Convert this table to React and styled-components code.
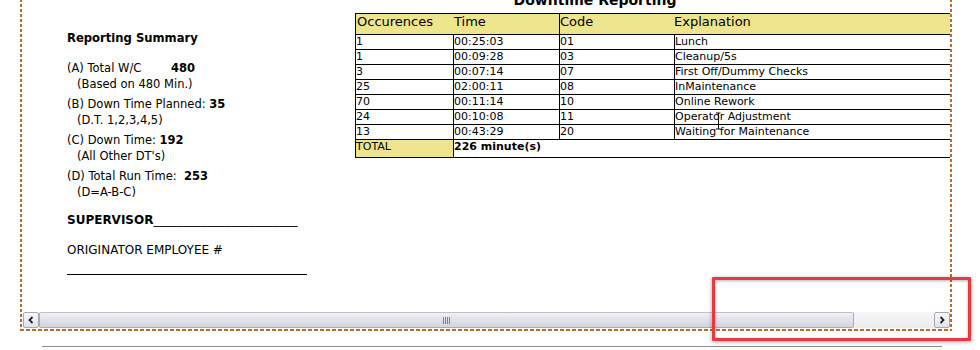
import React from 'react';
import styled, { createGlobalStyle } from 'styled-components';

const GlobalStyle = createGlobalStyle`
  html, body {
    margin: 0;
    padding: 0;
    background: #fff;
  }
  body {
    font-family: "DejaVu Sans", Verdana, sans-serif;
    color: #000;
    overflow: hidden;
  }
`;

const DASH = '#b06d38';

const Page = styled.div`
  position: relative;
  width: 980px;
  height: 350px;
  overflow: hidden;
`;

const Frame = styled.div`
  box-sizing: border-box;
  width: 932px;
  margin: -16px 0 0 20px;
  padding: 2px 2px 3px 2px;
  background:
    repeating-linear-gradient(90deg, ${DASH} 0 4px, transparent 4px 6px) left top / 100% 2px no-repeat,
    repeating-linear-gradient(90deg, ${DASH} 0 4px, transparent 4px 6px) left bottom / 100% 2px no-repeat,
    repeating-linear-gradient(180deg, ${DASH} 0 3px, transparent 3px 5px) left top / 2px 100% no-repeat,
    repeating-linear-gradient(180deg, ${DASH} 0 3px, transparent 3px 5px) right top / 2px 100% no-repeat;
`;

const Viewport = styled.div`
  display: flex;
  height: 326px;
  overflow: hidden;
`;

const Summary = styled.div`
  flex: none;
  box-sizing: border-box;
  width: 333px;
  padding: 45px 0 0 45px;
`;

const SummaryTitle = styled.div`
  font-size: 11.6px;
  font-weight: bold;
  line-height: 15px;
  margin-bottom: 14px;
`;

const Group = styled.div`
  & + & {
    margin-top: 4px;
  }
`;

const Line = styled.div`
  font-size: 11.5px;
  line-height: 16px;
  white-space: pre;
  padding-left: ${(p) => (p.$sub ? '10px' : '0')};
`;

const Value = styled.b`
  margin-left: ${(p) => p.$gap || '0'};
`;

const Supervisor = styled.div`
  margin-top: 12px;
  font-size: 12px;
  line-height: 16px;
  font-weight: bold;
  white-space: pre;
`;

const Originator = styled.div`
  margin-top: 14px;
  font-size: 12px;
  line-height: 16px;
`;

const SignLine = styled.div`
  width: 240px;
  margin-top: 16px;
  border-top: 1px solid #000;
`;

const Reporting = styled.div`
  flex: none;
  width: 640px;
  padding-top: 6px;
`;

const ReportTitle = styled.div`
  width: 480px;
  text-align: center;
  font-size: 14px;
  font-weight: bold;
  line-height: 17px;
  margin-bottom: 4px;
`;

const Table = styled.div`
  border-left: 1px solid #000;
  border-top: 1px solid #000;
`;

const Row = styled.div`
  display: grid;
  grid-template-columns: ${(p) => (p.$total ? '97px 1fr' : '97px 106px 115px 1fr')};
  height: ${(p) => p.$h}px;
  border-bottom: 1px solid #000;
`;

const Cell = styled.div`
  font-size: ${(p) => (p.$head ? '13px' : '11px')};
  font-weight: ${(p) => (p.$bold ? 'bold' : 'normal')};
  line-height: ${(p) => (p.$head ? '16px' : '14px')};
  padding-left: ${(p) => (p.$pad ? '1px' : '0')};
  background: ${(p) => (p.$khaki ? '#efe48e' : 'transparent')};
  border-left: ${(p) => (p.$div ? '1px solid #000' : 'none')};
  white-space: nowrap;
  overflow: hidden;
`;

const ScrollBar = styled.div`
  display: flex;
  height: 16px;
  margin-left: 1px;
`;

const ScrollButton = styled.div`
  flex: none;
  box-sizing: border-box;
  width: 16px;
  height: 16px;
  border: 1px solid #a7a8b0;
  border-radius: 2px;
  background: linear-gradient(#f8f8fa, #e2e3e9);
  display: flex;
  align-items: center;
  justify-content: center;
`;

const Thumb = styled.div`
  flex: none;
  box-sizing: border-box;
  width: 815px;
  height: 16px;
  border: 1px solid #a9aab3;
  border-top-color: #bfc0c7;
  border-radius: 2px;
  background: linear-gradient(#f1f1f5 0%, #e2e3ea 45%, #d3d4de 100%);
  display: flex;
  align-items: center;
  justify-content: center;
`;

const Track = styled.div`
  flex: 1;
  height: 16px;
  background: linear-gradient(#f6f6f8, #ececf0);
`;

const Rule = styled.div`
  width: 900px;
  margin: 15px 0 0 42px;
  border-top: 1px solid #8e8e8e;
`;

const Highlight = styled.div`
  position: absolute;
  left: 712px;
  top: 277px;
  width: 259px;
  height: 64px;
  box-sizing: border-box;
  border: 3px solid #e8393e;
  border-radius: 1px;
  box-shadow: 0 1px 4px rgba(0, 0, 0, 0.35), inset 0 1px 3px rgba(0, 0, 0, 0.3);
`;

const Cursor = styled.svg`
  position: absolute;
  left: 715px;
  top: 112px;
`;

const rows = [
  ['1', '00:25:03', '01', 'Lunch'],
  ['1', '00:09:28', '03', 'Cleanup/5s'],
  ['3', '00:07:14', '07', 'First Off/Dummy Checks'],
  ['25', '02:00:11', '08', 'InMaintenance'],
  ['70', '00:11:14', '10', 'Online Rework'],
  ['24', '00:10:08', '11', 'Operator Adjustment'],
  ['13', '00:43:29', '20', 'Waiting for Maintenance'],
];

const Chevron = ({ dir }) => (
  <svg width="8" height="8" viewBox="0 0 8 8">
    <polyline
      points={dir === 'left' ? '5.5,1 2.5,4 5.5,7' : '2.5,1 5.5,4 2.5,7'}
      fill="none"
      stroke="#222"
      strokeWidth="1.8"
    />
  </svg>
);

export default function App() {
  return (
    <Page>
      <GlobalStyle />
      <Frame>
        <Viewport>
          <Summary>
            <SummaryTitle>Reporting Summary</SummaryTitle>
            <Group>
              <Line>(A) Total W/C <Value $gap="26px">480</Value></Line>
              <Line $sub>(Based on 480 Min.)</Line>
            </Group>
            <Group>
              <Line>(B) Down Time Planned: <Value>35</Value></Line>
              <Line $sub>(D.T. 1,2,3,4,5)</Line>
            </Group>
            <Group>
              <Line>(C) Down Time: <Value>192</Value></Line>
              <Line $sub>(All Other DT's)</Line>
            </Group>
            <Group>
              <Line>(D) Total Run Time:  <Value>253</Value></Line>
              <Line $sub>(D=A-B-C)</Line>
            </Group>
            <Supervisor>SUPERVISOR<span style={{ fontWeight: 'normal' }}>________________________</span></Supervisor>
            <Originator>ORIGINATOR EMPLOYEE #</Originator>
            <SignLine />
          </Summary>
          <Reporting>
            <ReportTitle>Downtime Reporting</ReportTitle>
            <Table>
              <Row $h={20}>
                <Cell $head $khaki $pad>Occurences</Cell>
                <Cell $head $khaki $pad>Time</Cell>
                <Cell $head $khaki $div>Code</Cell>
                <Cell $head $khaki>Explanation</Cell>
              </Row>
              {rows.map((r, i) => (
                <Row key={i} $h={14}>
                  <Cell>{r[0]}</Cell>
                  <Cell $div>{r[1]}</Cell>
                  <Cell $div>{r[2]}</Cell>
                  <Cell $div>{r[3]}</Cell>
                </Row>
              ))}
              <Row $total $h={17}>
                <Cell $khaki>TOTAL</Cell>
                <Cell $div $bold>226 minute(s)</Cell>
              </Row>
            </Table>
          </Reporting>
        </Viewport>
        <ScrollBar>
          <ScrollButton><Chevron dir="left" /></ScrollButton>
          <Thumb>
            <svg width="8" height="7" viewBox="0 0 8 7">
              {[0.5, 2.5, 4.5, 6.5].map((x) => (
                <line key={x} x1={x} y1="0" x2={x} y2="7" stroke="#7c7f8c" strokeWidth="1" />
              ))}
            </svg>
          </Thumb>
          <Track />
          <ScrollButton><Chevron dir="right" /></ScrollButton>
        </ScrollBar>
      </Frame>
      <Rule />
      <Highlight />
      <Cursor width="7" height="18" viewBox="0 0 7 18">
        <path d="M1 1h2.5M3.5 1h2M3.5 1v16M1 17h2.5M3.5 17h2" fill="none" stroke="#000" strokeWidth="1" />
      </Cursor>
    </Page>
  );
}
